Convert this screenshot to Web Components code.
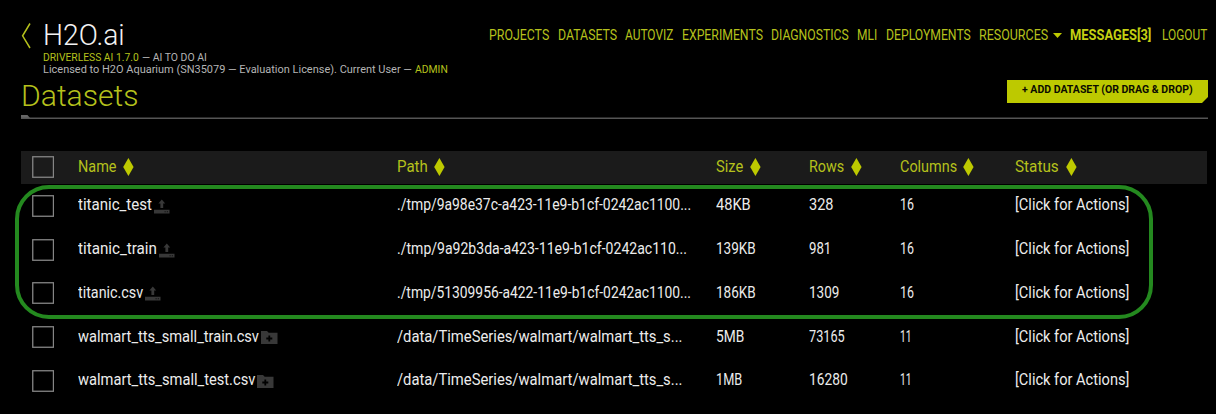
<!DOCTYPE html>
<html lang="en">
<head>
<meta charset="utf-8">
<title>H2O.ai Driverless AI – Datasets</title>
<style>
html,body{margin:0;padding:0;background:#000;overflow:hidden}
body{width:1216px;height:414px;font-family:Roboto,"Open Sans",sans-serif}
</style>
</head>
<body>
<dai-app></dai-app>
<script>
/* Text condensed or expanded to a fixed width: w is the width in px. */
class FitText extends HTMLElement {
  connectedCallback() {
    if (this.shadowRoot) return;
    const w = parseFloat(this.getAttribute('w'));
    this.attachShadow({mode: 'open'}).innerHTML = `<style>
      :host{display:block;flex:none;width:${w}px;white-space:pre;overflow:visible}
      span{display:inline-block;transform-origin:0 50%}
    </style><span><slot></slot></span>`;
    const s = this.shadowRoot.querySelector('span');
    s.style.transform = `scaleX(${w / s.offsetWidth})`;
  }
}

class SortDiamond extends HTMLElement {
  constructor() {
    super();
    this.attachShadow({mode: 'open'}).innerHTML = `<style>:host{display:block;flex:none;width:11px;height:18px}svg{display:block}</style>
    <svg width="11" height="18" viewBox="0 0 11 18"><path d="M5.4 0L10.6 9L5.4 18L.2 9Z" fill="#bdc900"/></svg>`;
  }
}

class CheckBox extends HTMLElement {
  constructor() {
    super();
    this.attachShadow({mode: 'open'}).innerHTML = `<style>:host{display:block;flex:none;width:22px;height:22px}svg{display:block}</style>
    <svg width="22" height="22"><rect x=".75" y=".75" width="20.7" height="20.5" fill="none" stroke="#858585" stroke-width="1.3"/></svg>`;
  }
}

class SourceIcon extends HTMLElement {
  connectedCallback() {
    const art = {
      upload: '<path d="M0 10.7H15.5V14.5H0Z M6.4 9V4.5H4.4L7.8 .5L11.2 4.5H9.2V9Z"/><path d="M10.5 12.2h1.2v1h-1.2z M12.8 12.2h1.2v1h-1.2z" fill="#111"/>',
      folder: '<path d="M0 1H6L7.7 2.8H16.5V14H0Z"/><path d="M7.4 5.5H9.2V7.6H11.3V9.4H9.2V11.5H7.4V9.4H5.3V7.6H7.4Z" fill="#000"/>'
    };
    this.attachShadow({mode: 'open'}).innerHTML = `<style>:host{display:block;flex:none;width:17px;height:15px}svg{display:block}</style>
    <svg width="17" height="15" viewBox="0 0 17 15" fill="#383838">${art[this.getAttribute('kind')]}</svg>`;
  }
}

class NavBar extends HTMLElement {
  constructor() {
    super();
    const items = [['PROJECTS',60,8.5],['DATASETS',59,8.5],['AUTOVIZ',48.5,8.5],['EXPERIMENTS',80.5,8.5],['DIAGNOSTICS',77.5,8.5],['MLI',20.5,8],['DEPLOYMENTS',84.5,8.5],['RESOURCES',69.5,5],['',9,8],['MESSAGES[3]',81,11],['LOGOUT',45,0]];
    this.attachShadow({mode: 'open'}).innerHTML = `<style>
      :host{display:flex;align-items:center;height:20px;color:#b5c11c;font-size:14px;line-height:20px}
      .b{font-weight:700;color:#c4d012}
      svg{display:block;flex:none}
    </style>` + items.map(([t, w, g]) => t
      ? `<fit-text w="${w}" style="margin-right:${g}px"${t === 'MESSAGES[3]' ? ' class="b"' : ''}>${t}</fit-text>`
      : `<svg width="9" height="5" style="margin-right:${g}px"><path d="M0 0H9L4.5 5Z" fill="#bdc900"/></svg>`).join('');
  }
}

class PageHeader extends HTMLElement {
  constructor() {
    super();
    this.attachShadow({mode: 'open'}).innerHTML = `<style>
      :host{display:grid;grid-template-columns:468px 1fr;height:77px;color:#b4b4b4}
      .brand{display:grid;grid-template-columns:22px auto;padding:19px 0 0 21.2px}
      svg{display:block;margin-top:4px}
      .logo{font-size:30px;font-weight:300;line-height:32px;color:#f2f2f2;height:32px}
      .sub{display:flex;gap:3px;font-size:11.8px;line-height:12px;height:11.7px}
      .y{color:#b5c11c}
      nav-bar{margin:25px 0 0 21.3px}
    </style>
    <div class="brand">
      <svg width="11" height="26" viewBox="0 0 11 26"><path d="M9 .5L1.6 12.8L9 25" fill="none" stroke="#b5c11c" stroke-width="1.5"/></svg>
      <div>
        <fit-text class="logo" w="82">H2O.ai</fit-text>
        <div class="sub"><fit-text class="y" w="96">DRIVERLESS AI 1.7.0</fit-text><fit-text w="64.5">— AI TO DO AI</fit-text></div>
        <div class="sub"><fit-text w="369">Licensed to H2O Aquarium (SN35079 — Evaluation License). Current User —</fit-text><fit-text class="y" w="32.5">ADMIN</fit-text></div>
      </div>
    </div>
    <nav-bar></nav-bar>`;
  }
}

class TitleBar extends HTMLElement {
  constructor() {
    super();
    this.attachShadow({mode: 'open'}).innerHTML = `<style>
      :host{display:block;width:1187px;margin-left:21px}
      .bar{display:flex;justify-content:space-between;height:38px}
      .title{font-size:30px;font-weight:300;line-height:36px;color:#b5c11c;margin-top:1px}
      .btn{display:flex;box-sizing:border-box;width:201px;height:23px;margin-top:3px;padding-left:14.5px;background:#bdc900;color:#0b0b00;
        font-size:11.5px;font-weight:700;line-height:19px;clip-path:polygon(0 0,100% 0,100% 17px,calc(100% - 6px) 100%,0 100%)}
      svg{display:block}
    </style>
    <div class="bar"><fit-text class="title" w="117.5">Datasets</fit-text><div class="btn"><fit-text w="171">+ ADD DATASET (OR DRAG &amp; DROP)</fit-text></div></div>
    <svg width="1187" height="4"><path d="M0 0H6.5L9 3H0Z" fill="#666"/><path d="M0 2.6H1187V4H0Z" fill="#555"/></svg>`;
  }
}

class DataTable extends HTMLElement {
  constructor() {
    super();
    const heads = [['Name',38.8],['Path',31],['Size',27.5],['Rows',35],['Columns',56.8],['Status',44]];
    const act = ['[Click for Actions]',114];
    const rows = [
      ['upload',['titanic_test',74.3],['./tmp/9a98e37c-a423-11e9-b1cf-0242ac1100...',294.5],['48KB',34.7],['328',24.5],['16',14],act],
      ['upload',['titanic_train',78.8],['./tmp/9a92b3da-a423-11e9-b1cf-0242ac110...',289.5],['139KB',39.7],['981',22.3],['16',14],act],
      ['upload',['titanic.csv',65.3],['./tmp/51309956-a422-11e9-b1cf-0242ac1100...',294],['186KB',39.7],['1309',30.3],['16',14],act],
      ['folder',['walmart_tts_small_train.csv',181],['/data/TimeSeries/walmart/walmart_tts_s...',285.5],['5MB',28.3],['73165',35.7],['11',11.5],act],
      ['folder',['walmart_tts_small_test.csv',177],['/data/TimeSeries/walmart/walmart_tts_s...',285.5],['1MB',26.3],['16280',38.7],['11',11.5],act]
    ];
    const ft = ([t, w]) => `<fit-text w="${w}">${t}</fit-text>`;
    this.attachShadow({mode: 'open'}).innerHTML = `<style>
      :host{display:block;position:relative;margin:32px 0 0 21px;width:1186px;font-size:16px;color:#ececec}
      .row,.head{display:grid;grid-template-columns:56.8px 319px 319.2px 93.3px 90.3px 115.5px 1fr;align-items:center}
      .head{height:33px;background:#1b1b1b;color:#b5c11c}
      .row{height:43.8px}
      .cell{display:flex;align-items:center;line-height:20px;height:20px}
      .head .cell{gap:6.7px;margin-bottom:2px}
      .row .cell{gap:2px;margin-bottom:1.4px}
      .row source-icon{margin-top:2px}
      check-box{margin-left:10.5px}
      .head check-box{margin-bottom:1px}
      .mark{position:absolute;left:-6.3px;top:34px;width:1138px;height:134px;box-sizing:border-box;border:4px solid #24891f;border-radius:34px}
    </style>
    <div class="head"><check-box></check-box>${heads.map(h => `<div class="cell">${ft(h)}<sort-diamond></sort-diamond></div>`).join('')}</div>
    ${rows.map(([k, ...c]) => `<div class="row"><check-box></check-box>${c.map((x, i) => `<div class="cell">${ft(x)}${i ? '' : `<source-icon kind="${k}"></source-icon>`}</div>`).join('')}</div>`).join('')}
    <div class="mark"></div>`;
  }
}

class DaiApp extends HTMLElement {
  constructor() {
    super();
    this.attachShadow({mode: 'open'}).innerHTML = `<style>:host{display:flex;flex-direction:column;width:1216px;height:414px;background:#000}</style>
    <page-header></page-header><title-bar></title-bar><data-table></data-table>`;
  }
}
customElements.define('fit-text', FitText);
customElements.define('sort-diamond', SortDiamond);
customElements.define('check-box', CheckBox);
customElements.define('source-icon', SourceIcon);
customElements.define('nav-bar', NavBar);
customElements.define('page-header', PageHeader);
customElements.define('title-bar', TitleBar);
customElements.define('data-table', DataTable);
customElements.define('dai-app', DaiApp);
</script>
</body>
</html>
